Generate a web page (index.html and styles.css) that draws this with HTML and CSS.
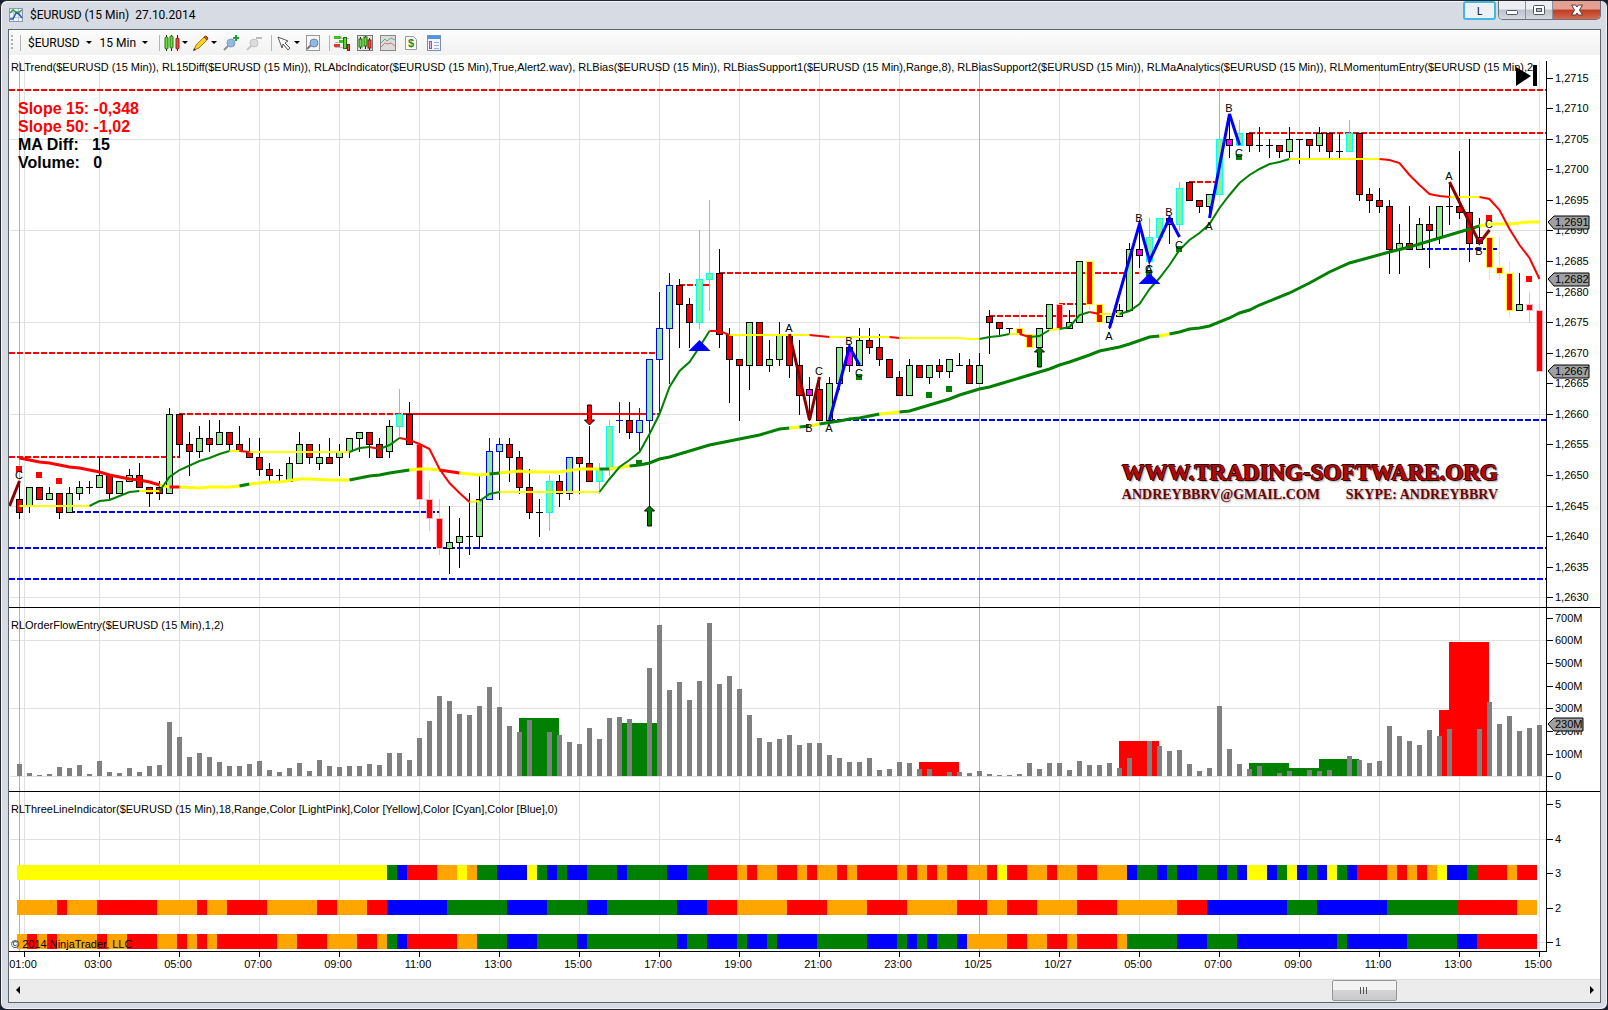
FILE: index.html
```html
<!DOCTYPE html>
<html lang="en">
<head>
    <meta charset="UTF-8">
    <meta name="viewport" content="width=device-width, initial-scale=1.0">
    <title>$EURUSD (15 Min) 27.10.2014</title>
    <link rel="stylesheet" href="styles.css">
</head>
<body>
<div class="window">
    <header class="titlebar">
        <svg class="app-icon" width="14" height="14" viewBox="0 0 14 14">
            <rect x="0.5" y="0.5" width="13" height="13" fill="#eef2fa" stroke="#8d97b0"/>
            <path d="M4.5 1v12M9.5 1v12M1 4.5h12M1 9.5h12" stroke="#b9c3dc"/>
            <path d="M1 5l3-3 3 2 3 0 3-2" fill="none" stroke="#2fa12f" stroke-width="1.5"/>
            <path d="M1 11h3l3-6 3 1 3 4" fill="none" stroke="#2757b8" stroke-width="1.5"/>
        </svg>
        <h1>$EURUSD (15 Min)&nbsp; 27.10.2014</h1>
        <button class="link-btn">L</button>
        <div class="win-buttons">
            <button aria-label="Minimize"><svg width="14" height="12" viewBox="0 0 14 12"><rect x="1.5" y="6.5" width="11" height="4" rx="1" fill="#fff" stroke="#50545c"/></svg></button>
            <button aria-label="Maximize"><svg width="14" height="12" viewBox="0 0 14 12"><rect x="1.5" y="1.5" width="11" height="9" rx="1" fill="#fff" stroke="#50545c"/><rect x="4.5" y="4.5" width="5" height="3" fill="#b5bac4" stroke="#50545c"/></svg></button>
            <button class="close" aria-label="Close"><svg width="14" height="12" viewBox="0 0 14 12"><path d="M1.5 1h4L7 3l1.5-2h4L9.500 6l3 5h-4L7 9l-1.500 2h-4l3-5z" fill="#fff" stroke="#5a3a3a"/></svg></button>
        </div>
    </header>

    <main class="client">
        <nav class="toolbar">
            <span class="grip"></span>
            <span class="sep"></span>
            <button class="text-btn">$EURUSD <i class="caret"></i></button>
            <button class="text-btn">15 Min <i class="caret"></i></button>
            <span class="sep"></span>
            <button class="icon-btn" aria-label="Chart style">
                <svg width="16" height="16" viewBox="0 0 16 16">
                    <path d="M2.5 0v16M7.5 0v16M13.5 0v16" stroke="#222"/>
                    <rect x="1" y="2" width="3" height="12" rx="1" fill="#5fe62c" stroke="#256b12"/>
                    <rect x="6" y="1" width="3" height="12" rx="1" fill="#5fe62c" stroke="#256b12"/>
                    <rect x="12" y="3" width="3" height="11" rx="1" fill="#ee4a3e" stroke="#8c1c16"/>
                </svg>
                <i class="caret"></i>
            </button>
            <button class="icon-btn" aria-label="Drawing tools">
                <svg width="16" height="16" viewBox="0 0 16 16">
                    <path d="M1 15l2-5L11 2l3 3-8 8z" fill="#f8d22a" stroke="#a87f10"/>
                    <path d="M11 2l2-1 2 2-1 2z" fill="#d4553c" stroke="#8c3522"/>
                    <path d="M0 16l1-3 2 2z" fill="#333"/>
                </svg>
                <i class="caret"></i>
            </button>
            <button class="icon-btn wide" aria-label="Zoom in">
                <svg width="18" height="16" viewBox="0 0 18 16">
                    <path d="M2 15l5-5" stroke="#8b8f96" stroke-width="2"/>
                    <circle cx="9" cy="8" r="4" fill="#8cbbe6" stroke="#8b9bb0"/>
                    <path d="M14 0v6M11 3h6" stroke="#18a336" stroke-width="2"/>
                </svg>
            </button>
            <button class="icon-btn wide" aria-label="Zoom out" disabled>
                <svg width="18" height="16" viewBox="0 0 18 16">
                    <path d="M2 15l5-5" stroke="#c6c6c6" stroke-width="2"/>
                    <circle cx="9" cy="8" r="4" fill="#dcdcdc" stroke="#c2c2c2"/>
                    <path d="M11 3h6" stroke="#bbb" stroke-width="2"/>
                </svg>
            </button>
            <span class="sep"></span>
            <button class="icon-btn" aria-label="Cursor">
                <svg width="16" height="16" viewBox="0 0 16 16"><path d="M2 2l10 4-3 2 5 5-2 2-5-6-1 4z" fill="#fff" stroke="#555"/></svg>
                <i class="caret"></i>
            </button>
            <button class="icon-btn" aria-label="Zoom frame">
                <svg width="16" height="16" viewBox="0 0 16 16">
                    <rect x="1.5" y="0.5" width="13" height="15" fill="#f6f6f6" stroke="#999"/>
                    <path d="M2 14l4-4" stroke="#777" stroke-width="2"/>
                    <circle cx="9" cy="8" r="4" fill="#8cbbe6" stroke="#6f87a5"/>
                </svg>
            </button>
            <span class="sep"></span>
            <button class="icon-btn tool" aria-label="Chart trader">
                <svg width="16" height="16" viewBox="0 0 16 16">
                    <path d="M1 3.5h14M1 7.5h9M1 12.5h14" stroke="#bbb"/>
                    <path d="M0 1h6l2 1-2 2H0zM5 5h4v3H5z" fill="#3fbf22"/>
                    <path d="M0 9h6v3H0z" fill="#e23a2e"/>
                    <rect x="9.5" y="2.5" width="3" height="11" fill="#5fd62c" stroke="#256b12"/>
                    <rect x="13.5" y="9.5" width="2" height="6" fill="#ee4a3e" stroke="#8c1c16"/>
                </svg>
            </button>
            <button class="icon-btn tool" aria-label="Data series">
                <svg width="16" height="16" viewBox="0 0 16 16">
                    <rect x="0.5" y="0.5" width="15" height="15" fill="#e4e4e4" stroke="#777"/>
                    <path d="M3.5 2v12M8.5 1v13M12.5 3v12" stroke="#222"/>
                    <rect x="2" y="4" width="3" height="8" fill="#5fe62c" stroke="#256b12"/>
                    <rect x="7" y="2" width="3" height="9" fill="#5fe62c" stroke="#256b12"/>
                    <rect x="11" y="5" width="3" height="8" fill="#ee4a3e" stroke="#8c1c16"/>
                </svg>
            </button>
            <button class="icon-btn tool" aria-label="Indicators">
                <svg width="16" height="16" viewBox="0 0 16 16">
                    <rect x="0.5" y="0.5" width="15" height="15" fill="#dcdcdc" stroke="#888"/>
                    <path d="M1 8l4-4 2 2 4-3 4 2" fill="none" stroke="#4bb588"/>
                    <path d="M1 12l4-4 3 1 3-1 4 3" fill="none" stroke="#e07070"/>
                </svg>
            </button>
            <button class="icon-btn tool" aria-label="Strategies">
                <svg width="16" height="16" viewBox="0 0 16 16">
                    <path d="M2.5 1.5h8l3 3v10h-11z" fill="#fff" stroke="#999"/>
                    <text x="8" y="12" class="dollar">$</text>
                </svg>
            </button>
            <button class="icon-btn tool" aria-label="Properties">
                <svg width="16" height="16" viewBox="0 0 16 16">
                    <rect x="1.5" y="0.5" width="13" height="15" fill="#f3f6fc" stroke="#7890b8"/>
                    <path d="M2 1h12v3H2z" fill="#4f97e0"/>
                    <rect x="3.5" y="6.5" width="2" height="7" fill="#d8c4f4" stroke="#8a56d0"/>
                    <path d="M8 7.5h5M8 10.5h5M8 13.5h5" stroke="#9fb0cc"/>
                </svg>
            </button>
        </nav>

        <div class="chart">
            <section class="pane pane-price">
                <svg class="plot" id="price"></svg>
                <p class="pane-title">RLTrend($EURUSD (15 Min)), RL15Diff($EURUSD (15 Min)), RLAbcIndicator($EURUSD (15 Min),True,Alert2.wav), RLBias($EURUSD (15 Min)), RLBiasSupport1($EURUSD (15 Min),Range,8), RLBiasSupport2($EURUSD (15 Min)), RLMaAnalytics($EURUSD (15 Min)), RLMomentumEntry($EURUSD (15 Min),2,</p>
                <div class="stats">
                    <p class="down">Slope 15: -0,348</p>
                    <p class="down">Slope 50: -1,02</p>
                    <p>MA Diff:&nbsp;&nbsp; 15</p>
                    <p>Volume:&nbsp;&nbsp; 0</p>
                </div>
                <button class="go-last" aria-label="Go to last bar"><svg width="22" height="22" viewBox="0 0 22 22"><path d="M0 2l15 9L0 21zM17 0h4v21h-4z"/></svg></button>
                <div class="watermark">
                    <p class="site">WWW.TRADING-SOFTWARE.ORG</p>
                    <p class="contact"><span>ANDREYBBRV@GMAIL.COM</span><span>SKYPE: ANDREYBBRV</span></p>
                </div>
            </section>
            <section class="pane pane-volume">
                <svg class="plot" id="volume"></svg>
                <p class="pane-title">RLOrderFlowEntry($EURUSD (15 Min),1,2)</p>
            </section>
            <section class="pane pane-lines">
                <svg class="plot" id="lines"></svg>
                <p class="pane-title">RLThreeLineIndicator($EURUSD (15 Min),18,Range,Color [LightPink],Color [Yellow],Color [Cyan],Color [Blue],0)</p>
                <p class="copyright">© 2014 NinjaTrader, LLC</p>
            </section>
            <div class="pane pane-time">
                <svg class="plot" id="time"></svg>
            </div>
        </div>

        <div class="scrollbar">
            <button aria-label="Scroll left"><svg width="4" height="8" viewBox="0 0 4 8"><path d="M4 0v8L0 4z"/></svg></button>
            <input type="range" min="0" max="1000" value="875" aria-label="Chart position">
            <button aria-label="Scroll right"><svg width="4" height="8" viewBox="0 0 4 8"><path d="M0 0v8l4-4z"/></svg></button>
        </div>
    </main>
</div>
<script src="chart.js"></script>
</body>
</html>
```

FILE: styles.css
```css
* {
    box-sizing: border-box;
}

body {
    margin: 0;
    height: 100vh;
    background: #14202e;
    font-family: "Liberation Sans", Arial, sans-serif;
    font-size: 11px;
    color: #000;
    overflow: hidden;
}

p, h1 {
    margin: 0;
    font-weight: normal;
}

button {
    border: none;
    background: none;
    padding: 0;
    font-family: inherit;
    color: inherit;
}

.window {
    height: 100vh;
    display: flex;
    flex-direction: column;
    border: 1px solid #26262e;
    border-radius: 7px;
    padding: 0 6px 6px 7px;
    background: #d6dbe4;
    box-shadow: inset 1px 1px 0 #f6f8fa, inset -1px -1px 0 #f0f3f6;
}

/* title bar */
.titlebar {
    display: flex;
    align-items: center;
    height: 28px;
    padding: 0 0 0 1px;
    flex: none;
}

.app-icon {
    margin-right: 7px;
}

.titlebar h1 {
    flex: 1;
    font-family: Roboto, "Open Sans", sans-serif;
    font-size: 12px;
}

.link-btn {
    align-self: flex-start;
    width: 33px;
    height: 19px;
    margin-right: 2px;
    border: 2px solid #3fb8e4;
    border-radius: 3px;
    background: #eef1f4;
    font-family: "Open Sans", sans-serif;
    font-size: 11px;
    line-height: 14px;
}

.win-buttons {
    display: flex;
    align-self: flex-start;
    height: 19px;
    border: 1px solid #6d737d;
    border-top: none;
    border-radius: 0 0 5px 5px;
    overflow: hidden;
}

.win-buttons button {
    width: 27px;
    border-right: 1px solid #8a9099;
    background: linear-gradient(#eceef2 45%, #bcc2cb 50%, #d5d9e0);
    display: flex;
    align-items: center;
    justify-content: center;
}

.win-buttons .close {
    width: 47px;
    border-right: none;
    background: linear-gradient(#e4a193 45%, #bd3c24 50%, #d66a4c);
}

/* client area */
.client {
    flex: 1;
    min-height: 0;
    display: flex;
    flex-direction: column;
    border: 1px solid #60646c;
    background: #fff;
}

.toolbar {
    flex: none;
    display: flex;
    align-items: center;
    height: 25px;
    padding-left: 2px;
    background: linear-gradient(#fdfdfd, #f1f1f1);
    font-family: Roboto, "Open Sans", sans-serif;
}

.toolbar button {
    font-size: 12px;
    display: flex;
    align-items: center;
}

.grip {
    width: 2px;
    height: 15px;
    background: repeating-linear-gradient(#b0b0b0 0 2px, transparent 2px 4px);
}

.sep {
    width: 1px;
    height: 16px;
    margin: 0 4px 0 3px;
    background: #b4b4b4;
}

.grip + .sep {
    margin: 0 7px;
}

.caret {
    border: 3px solid transparent;
    border-top-color: #000;
    border-bottom: none;
}

.text-btn {
    gap: 6px;
    margin-right: 8px;
}

.icon-btn {
    gap: 2px;
    margin-right: 5px;
}

.icon-btn.tool {
    margin-right: 7px;
}

.dollar {
    font: bold 11px "Liberation Sans", Arial, sans-serif;
    fill: #1c8a1c;
    text-anchor: middle;
}

/* chart panes: every layer of a pane shares one grid cell */
.chart {
    flex: 1;
    min-height: 0;
    display: flex;
    flex-direction: column;
}

.pane {
    display: grid;
    grid-template: minmax(0, 1fr) / minmax(0, 1fr);
    min-height: 0;
    overflow: hidden;
}

.pane > * {
    grid-area: 1 / 1;
}

.pane-price {
    flex: 552 1 0;
}

.pane-volume {
    flex: 183 1 0;
    border-top: 1px solid #000;
}

.pane-lines {
    flex: 159 1 0;
    border-top: 1px solid #000;
}

.pane-time {
    flex: none;
    height: 28px;
}

.plot {
    display: block;
    width: 100%;
    height: 100%;
}

.plot text {
    font-size: 11px;
}

.plot .mark {
    text-anchor: middle;
}

.pane-title {
    align-self: start;
    margin: 11px 54px 0 2px;
    line-height: 13px;
    white-space: nowrap;
    overflow: hidden;
}

.pane-price .pane-title {
    margin-top: 6px;
}

.stats {
    align-self: start;
    justify-self: start;
    padding: 45px 0 0 9px;
    font-size: 16px;
    line-height: 18px;
}

.stats p {
    font-weight: bold;
}

.stats .down {
    color: #f00;
}

.go-last {
    align-self: start;
    justify-self: end;
    width: 22px;
    height: 22px;
    margin: 10px 62px 0 0;
}

.watermark {
    align-self: start;
    justify-self: end;
    margin: 405px 102px 0 0;
    font-family: "Liberation Serif", "Times New Roman", serif;
    color: #b30808;
}

.watermark p {
    font-weight: bold;
}

.watermark .site {
    font-size: 23px;
    line-height: 26px;
    text-shadow: 1px 1px 0 #300, -1px 0 0 #300, 0 -1px 0 #300, 2px 2px 2px #999;
}

.watermark .contact {
    display: flex;
    justify-content: space-between;
    font-size: 14px;
    line-height: 18px;
    color: #6c0404;
    text-shadow: 1px 1px 2px #999;
}

.copyright {
    align-self: end;
    margin-left: 2px;
    line-height: 13px;
}

/* scrollbar */
.scrollbar {
    flex: none;
    display: flex;
    align-items: flex-start;
    height: 23px;
    background: #ececec;
    border-top: 1px solid #dcdcdc;
}

.scrollbar button {
    width: 17px;
    height: 20px;
    display: flex;
    align-items: center;
    justify-content: center;
}

.scrollbar input {
    appearance: none;
    flex: 1;
    min-width: 0;
    height: 21px;
    margin: 0;
    background: none;
}

.scrollbar input::-webkit-slider-thumb {
    appearance: none;
    width: 65px;
    height: 21px;
    border: 1px solid #979797;
    border-radius: 2px;
    background:
        repeating-linear-gradient(90deg, #555 0 1px, transparent 1px 3px) center / 9px 7px no-repeat,
        linear-gradient(#f3f3f3 45%, #d4d4d6 50%, #c9c9cb);
}
```

FILE: chart.js
```js
const SVG = 'http://www.w3.org/2000/svg';
const BARS = 153;
const LEFT = 10;      // first bar
const AXIS = 53;      // width of the price axis on the right
const RIGHT = 61;     // last bar to the right edge

// open, high, low, close in pips over 1,2600; last letter is the outline
const candles = `
46 49 43 44|45 48 44 48|48 48 46 46|46 48 46 47|47 47 43 44|44 48 44 47|47 49 46 48|48 49 47 48
48 53 48 50|50 50 46 47|47 49 47 49|49 51 49 50|50 52 48 48|48 48 45 47|48 49 46 47|47 61 47 60
60 60 53 55|55 57 50 54|54 58 53 56|56 59 54 55|55 59 55 57|57 57 54 55|55 58 54 54|54 56 53 53
53 56 50 51|51 52 49 50|50 51 49 50|49 53 49 52|52 57 52 55|55 55 52 53|52 55 51 53|53 56 52 52
53 55 50 54|54 56 53 56|56 57 54 57|57 57 53 55|55 56 53 53|54 59 53 58|58 64 56 60 c|60 62 55 55
55 55 45 46 p|46 49 41 43 p|43 46 37 38 p|38 45 34 39|39 43 35 40|40 47 37 40|40 50 38 46|46 56 46 54 b
54 56 46 55 b|55 56 49 53|53 54 47 48|48 51 43 44|44 46 40 44|44 50 41 49 c|49 50 45 47|47 53 46 53 b
53 53 47 52|52 58 49 49|49 52 47 51 c|51 59 50 58 c|59 62 57 59 b|59 62 56 57|57 61 54 59 b|59 69 45 69 b
69 80 60 74 b|74 83 65 81 b|81 82 71 78|78 79 71 75|75 90 74 82 c|82 95 77 83 c|83 87 71 73|73 74 62 69
69 69 59 68|68 75 64 75|75 75 68 68|68 72 67 69|69 75 68 73|73 73 66 68|68 72 60 63|64 66 59 63 m
64 66 59 59|59 66 59 65|65 71 64 71|71 71 67 68 m|68 74 68 72|72 74 70 71|71 73 68 69|69 69 66 66
66 67 63 63|63 69 63 68|68 68 66 66|66 68 65 68|68 69 66 67|67 69 66 69|68 70 68 68|68 69 65 65
65 70 65 68|76 77 70 75|75 75 73 74|74 74 73 74|74 77 73 73 y|73 73 71 71 y|71 74 71 74|74 78 74 78
78 78 73 74 p|74 77 74 75|75 85 75 85|85 85 77 78 y|78 78 71 75 y|75 76 74 76|76 78 76 77|77 88 77 87
87 90 84 86 m|85 92 85 89 c|89 92 89 92 c|92 92 88 91 m|91 98 90 97 c|98 98 95 95|95 95 93 94|94 96 93 96
96 113 96 105 c|105 109 102 104 m|104 108 104 106 c|106 106 103 104|104 107 103 104|104 105 102 104|104 104 102 103|103 107 102 105
105 105 101 105|105 105 102 104|104 107 103 106|106 106 102 103|103 106 102 103|103 108 103 106 c|106 106 95 96|96 97 93 95
95 97 93 94|94 95 83 87|87 91 83 88|88 94 87 87|87 92 87 91|91 94 84 90|89 94 88 94|94 98 91 94
94 103 92 93|93 105 85 88|89 92 88 88 m|89 89 82 84 y|84 89 82 83 y|83 85 76 77 y|77 83 77 78|78 80 75 77 p
77 78 67 67 p`.trim().split(/[|\n]/);

const outline = { c: '#00ffff', b: '#0000ff', y: '#ffff00', p: '#ffb6c1', m: '#000000' };
const colors = { r: '#ff0000', g: '#008000', b: '#0000ff', y: '#ffff00', o: '#ffa500' };

// moving averages: colour, then bar:price pairs
const slow = [
    'r 0:52.8 2:52.2 3:52 5:51.3 6:51.2 8:50.5 9:50 11:49.4 12:49.2 13:48.9 14:48.3', 'y 14:48.3 15:48.1', 'r 15:48.1 16:48',
    'y 16:48 18:47.9 19:48.1 21:48.1 22:48.2', 'g 22:48.2 23:48.6', 'y 23:48.6 25:48.8 26:48.8 28:49.4 29:49.3 31:49.1 33:49.2',
    'g 33:49.2 35:49.8 36:50 37:50.3 39:50.8', 'y 39:50.8 40:51 41:51 42:50.8', 'r 42:50.8 44:50.3', 'y 44:50.3 46:50 47:50.2',
    'g 47:50.2 48:50.4', 'y 48:50.4 50:50.7 51:50.5 54:50.5 56:50.9 58:50.9', 'g 58:50.9 59:51', 'y 59:51 61:51.4',
    'g 61:51.4 62:51.6 63:52 64:52.6 65:52.9 69:54.9 72:55.9 74:56.5 76:57.5 77:57.7', 'y 77:57.7 78:57.8', 'g 78:57.8 79:58',
    'y 79:58 80:58.4', 'g 80:58.4 82:58.9 83:59.2 84:59.3 86:60', 'y 86:60 88:60.3',
    'g 88:60.3 89:60.5 92:61.9 93:62.5 94:63 95:63.6 96:64 97:64.4 98:64.8 100:65.8 101:66.3 102:66.9 103:67.4 104:68 105:68.4 107:69.7 108:70.2 110:70.9 111:71.5 113:72.5 114:72.8',
    'y 114:72.8 115:73',
    'g 115:73 116:73.4 117:73.8 118:74 119:74.3 121:75.7 122:76.5 123:77 124:77.8 127:79.8 129:81.4 131:83.2 133:84.6 137:86.5 139:87.3 141:88.3 143:89.3 145:90.2 146:90.7',
    'y 146:90.7 147:91 149:91.1 151:91.4 152:91.3'
];
const fast = [
    'y 0:45 7:45', 'g 7:45 8:45.7 9:45.9 11:47.2 12:47.4', 'y 12:47.4 14:47.4', 'g 14:47.4 15:49.7 16:50.8 18:52.3 19:52.8 20:53.5 21:54',
    'y 21:54 22:54', 'r 22:54 23:53.8', 'y 23:53.8 33:53.8', 'g 33:53.8 34:54.4 35:54.6', 'r 35:54.6 36:54.3', 'g 36:54.3 37:54.9 38:56',
    'r 38:56 39:55.8 40:55.1 41:54.3 42:51 43:48.7 44:47 45:45.6', 'y 45:45.6 46:45.8', 'g 46:45.8 47:46.9 48:47.2', 'y 48:47.2 58:47.2',
    'g 58:47.2 59:49.4 60:51.3 61:52.5 62:53.7 63:56.7 64:60 65:64.4 66:67 67:68.5 68:71 69:73.6', 'r 69:73.6 70:73.5 71:72.9',
    'y 71:72.9 79:72.9', 'r 79:72.9 81:72.6', 'y 81:72.6 87:72.6', 'r 87:72.6 88:72.4', 'y 88:72.4 94:72.4 95:72.2 96:72.2',
    'g 96:72.2 97:72.6 98:72.8 99:73', 'y 99:73 100:73', 'r 100:73 101:72.5', 'g 101:72.5 102:72.8 103:73.7', 'y 103:73.7 104:73.8',
    'g 104:73.8 105:74.2 106:76.2 107:76.6', 'r 107:76.6 108:76.3', 'y 108:76.3 110:76.3',
    'g 110:76.3 111:76.9 112:78 113:80.4 114:82.3 115:84.3 116:86.8 117:88.4 118:89.6 119:91.1 120:93.7 121:95.8 122:97.8 123:99.1 124:100.1 125:100.9 126:101.2 127:101.7',
    'y 127:101.7 136:101.7', 'r 136:101.7 137:101.5 138:101 139:99 140:97.4 141:96 142:95.6 143:95.5', 'y 143:95.5 146:95.5',
    'r 146:95.5 147:95.2 148:93.4 149:90.2 150:87.6 151:85.5 152:82'
];

// support and resistance: colour, price, from bar, to bar (null = edge of the plot)
const levels = [
    ['r', 113, null, null], ['r', 53, null, 16], ['r', 60, 16, 63], ['r', 60, 39, 64], ['r', 70, null, 64], ['r', 81, 66, 69],
    ['r', 83, 70, 112], ['r', 76, 97, 106], ['r', 78, 104, 107], ['r', 98, 117, 120], ['r', 106, 123, null],
    ['b', 44, 5, 42], ['b', 38, null, null], ['b', 33, null, null], ['b', 59, 81, null], ['b', 87, 140, 148]
];

const waves = [
    ['#8b0000', '-1:45 0:49'], ['#8b0000', '77:73 79:59 80:66'], ['#0000ff', '81:59 83:71 84:68'],
    ['#0000ff', '109:74 112:91 113:85 115:92 116:89'], ['#0000ff', '119:92 121:109 122:104'], ['#8b0000', '143:98 146:88 147:90']
];

// letter, bar, price, side (1 = above the point)
const letters = [
    ['C', 0, 49, 1], ['A', 77, 73, 1], ['B', 79, 59, 0], ['C', 80, 66, 1], ['A', 81, 59, 0], ['B', 83, 71, 1], ['C', 84, 68, 0],
    ['A', 109, 74, 0], ['B', 112, 91, 1], ['C', 113, 85, 0], ['A', 113, 85, 0], ['B', 115, 92, 1], ['C', 116, 89, 0],
    ['A', 119, 92, 0], ['B', 121, 109, 1], ['C', 122, 104, 0], ['A', 143, 98, 1], ['B', 146, 88, 0], ['C', 147, 90, 1]
];

const dots = [
    ['r', 0, 51], ['r', 2, 50], ['r', 4, 49], ['g', 62, 52], ['g', 84, 66], ['g', 91, 63], ['g', 93, 64],
    ['g', 113, 83], ['g', 116, 87], ['g', 122, 102], ['r', 147, 92], ['r', 151, 82]
];
const triangles = [[68, 72], [113, 83]];

// millions
const volumes = [
    56, 16, 7, 12, 43, 38, 51, 12, 69, 21, 16, 38, 21, 47, 51, 241, 175, 87, 104, 87, 65, 47, 47, 56, 69, 29, 21, 38, 60, 25,
    74, 47, 43, 47, 47, 56, 51, 104, 104, 74, 171, 245, 356, 334, 276, 272, 312, 395, 307, 223, 197, 250, 0, 197, 184, 153, 144, 215, 166, 259,
    263, 254, 0, 479, 669, 382, 417, 338, 422, 678, 409, 444, 387, 272, 171, 153, 166, 184, 140, 148, 148, 96, 82, 65, 65, 82, 29, 34, 65, 60,
    34, 34, 0, 21, 21, 16, 25, 12, 7, 7, 12, 60, 34, 60, 60, 29, 69, 51, 51, 60, 38, 82, 0, 157, 135, 113, 118, 56, 25, 38,
    312, 122, 56, 34, 47, 0, 16, 25, 0, 29, 25, 29, 0, 91, 74, 60, 69, 223, 179, 157, 140, 206, 179, 210, 0, 0, 210, 329, 232, 268,
    201, 215, 228
];
const flows = [
    ['g', 50, 256], ['g', 60, 234], ['r', 90, 63], ['r', 110, 156], ['g', 123, 59], ['g', 127, 37], ['g', 130, 77], ['r', 142, 292], ['r', 143, 592]
];

// run lengths of the three trend rows, keyed by axis value
const rows = {
    3: 'y37 g1 b1 r3 o2 y1 o1 g2 b3 y1 g1 b1 g1 b2 g3 b1 g4 b2 g2 r3 o1 r1 o2 r2 o1 r1 o2 r1 o1 r4 o1 r1 o1 r1 o1 r2 o2 r1 y1 r2 o2 r1 o2 r2 o3 b1 g2 b1 g1 b2 g2 b1 g1 b1 y2 b1 g1 y1 b1 g1 b1 y1 g1 b1 r3 o1 r1 o1 r1 o1 y1 b2 g1 r3 o1 r2',
    2: 'o4 r1 o3 r6 o4 r1 o2 r4 o5 r2 o3 r2 b6 g6 b4 g4 b2 g7 b3 r3 o5 r4 o4 r4 o5 r3 o2 r3 o4 r4 o6 r3 b8 g3 b7 g7 r6 o2',
    1: 'o1 r1 o1 r1 o4 r1 o2 r3 o2 r1 o1 r1 o1 r6 o2 r3 o3 r2 o1 g1 b1 r5 o2 g3 b3 g4 b1 g9 b1 g2 b3 g1 b2 g1 b4 g5 b3 g1 b1 g1 b1 g2 b1 o4 r2 o2 r2 o1 r4 o1 g5 b3 g3 b10 g1 b6 g5 b2 r6'
};

const times = [[0.5, '01:00']];
['03:00', '05:00', '07:00', '09:00', '11:00', '13:00', '15:00', '17:00', '19:00', '21:00', '23:00', '10/25', '10/27',
    '05:00', '07:00', '09:00', '11:00', '13:00', '15:00'].forEach((t, i) => times.push([8 + i * 8, t]));

function el(parent, name, attrs, text) {
    const node = document.createElementNS(SVG, name);
    for (const key in attrs) node.setAttribute(key, attrs[key]);
    if (text !== undefined) node.textContent = text;
    parent.appendChild(node);
    return node;
}

function rect(svg, x, y, w, h, fill) {
    return el(svg, 'rect', { x, y, width: w, height: h, fill });
}

function setup(id, min, max) {
    const svg = document.getElementById(id);
    svg.innerHTML = '';
    const w = svg.clientWidth;
    const h = svg.clientHeight;
    return {
        svg, w, h,
        step: (w - LEFT - RIGHT) / (BARS - 1),
        x(i) { return Math.round(LEFT + i * this.step); },
        y(v) { return Math.round((max - v) / (max - min) * h); }
    };
}

function grid(c, values, top) {
    times.forEach(([bar]) => rect(c.svg, c.x(bar), top, 1, c.h - top, '#e0e0e0'));
    values.forEach(v => rect(c.svg, 1, c.y(v), c.w - AXIS, 1, '#e0e0e0'));
    [0, 96].forEach(bar => rect(c.svg, c.x(bar), top, 1, c.h - top, '#b4b4b4'));
}

function axis(c, values, format, top) {
    const x = c.w - AXIS;
    rect(c.svg, x - 1, top, 1, c.h - top, '#000');
    values.forEach(v => {
        rect(c.svg, x, c.y(v), 6, 1, '#000');
        el(c.svg, 'text', { x: x + 8, y: c.y(v) + 4 }, format(v));
    });
}

function tag(c, v, text, width) {
    const x = c.w - AXIS + 1;
    const y = c.y(v);
    el(c.svg, 'path', { d: `M${x} ${y}l6 -6h${width}v13h-${width}z`, fill: '#a0a0a0', stroke: '#000' });
    el(c.svg, 'text', { x: x + 7, y: y + 4 }, text);
}

function points(c, str) {
    return str.split(' ').map(p => {
        const [bar, v] = p.split(':');
        return (c.x(+bar) + 0.5) + ',' + c.y(+v);
    }).join(' ');
}

function average(c, parts, width) {
    parts.forEach(part => {
        el(c.svg, 'polyline', { points: points(c, part.slice(2)), fill: 'none', stroke: colors[part[0]], 'stroke-width': width });
    });
}

function candle(c, i, str) {
    const [open, high, low, close, type] = str.split(' ');
    const edge = outline[type] || '#000';
    const x = c.x(i);
    const top = c.y(Math.max(open, close));
    const bottom = c.y(Math.min(open, close));
    rect(c.svg, x, c.y(high), 1, c.y(low) - c.y(high) + 1, edge);
    rect(c.svg, x - 3, top, 7, bottom - top + 1, edge);
    if (open === close) return;
    let fill = +close > +open ? '#90ee90' : '#ff0000';
    if (type === 'm') fill = '#ff00ff';
    rect(c.svg, x - 2, top + 1, 5, bottom - top - 1, fill);
}

function arrow(c, bar, y, dir, fill) {
    const x = c.x(bar) + 0.5;
    el(c.svg, 'path', { d: `M${x} ${y}l5 ${5 * dir}h-3v${15 * dir}h-4v${-15 * dir}h-3z`, fill, stroke: '#000' });
}

function drawPrice() {
    const c = setup('price', 28.4, 118.7);
    grid(c, [105, 90, 75, 60, 45, 30], 6);

    levels.forEach(([color, v, from, to]) => {
        const x1 = from === null ? 0 : c.x(from);
        const x2 = to === null ? c.w - AXIS - 1 : c.x(to);
        el(c.svg, 'path', { d: `M${x1} ${c.y(v)}H${x2}`, stroke: colors[color], 'stroke-width': 2, 'stroke-dasharray': '6 2' });
    });
    candles.forEach((str, i) => candle(c, i, str));
    average(c, slow, 3);
    average(c, fast, 2);

    dots.forEach(([color, bar, v]) => rect(c.svg, c.x(bar) - 3, c.y(v) - 3, 6, 6, colors[color]));
    triangles.forEach(([bar, v]) => {
        el(c.svg, 'path', { d: `M${c.x(bar) + 0.5} ${c.y(v)}l11 11h-22z`, fill: '#0000ff' });
    });
    waves.forEach(([stroke, pts]) => {
        el(c.svg, 'polyline', { points: points(c, pts), fill: 'none', stroke, 'stroke-width': 3 });
    });
    arrow(c, 57, c.y(58.2), -1, '#ff0000');
    arrow(c, 63, c.y(45), 1, '#008000');
    arrow(c, 102, c.y(71), 1, '#008000');
    letters.forEach(([t, bar, v, above]) => {
        el(c.svg, 'text', { x: c.x(bar), y: c.y(v) + (above ? -2 : 12), class: 'mark' }, t);
    });

    const ticks = [];
    for (let v = 115; v >= 30; v -= 5) ticks.push(v);
    const label = v => '1,' + Math.floor(2600 + v);
    axis(c, ticks, label, 6);
    [91.3, 82, 67].forEach(v => tag(c, v, label(v), 35));
}

function drawVolume() {
    const c = setup('volume', -64, 743);
    grid(c, [600, 300, 0], 0);
    flows.forEach(([color, bar, v]) => rect(c.svg, c.x(bar), c.y(v), c.x(bar + 4) - c.x(bar), c.y(0) - c.y(v), colors[color]));
    volumes.forEach((v, i) => rect(c.svg, c.x(i) - 2, c.y(v), 5, c.y(0) - c.y(v), '#808080'));
    axis(c, [700, 600, 500, 400, 300, 200, 100, 0], v => v ? v + 'M' : '0', 0);
    tag(c, 230, '230M', 29);
}

function drawLines() {
    const c = setup('lines', 0.75, 5.35);
    grid(c, [4, 1], 0);
    for (const value in rows) {
        let bar = 0;
        rows[value].split(' ').forEach(run => {
            const next = bar + Number(run.slice(1));
            rect(c.svg, c.x(bar) - 2, c.y(value) - 8, c.x(next) - c.x(bar), 15, colors[run[0]]);
            bar = next;
        });
    }
    axis(c, [5, 4, 3, 2, 1], v => v, 0);
}

function drawTime() {
    const c = setup('time', 0, 1);
    rect(c.svg, 0, 0, c.w - AXIS, 1, '#000');
    times.forEach(([bar, text]) => {
        rect(c.svg, c.x(bar), 0, 1, 6, '#000');
        el(c.svg, 'text', { x: c.x(bar) - 1, y: 17, class: 'mark' }, text);
    });
}

function draw() {
    drawPrice();
    drawVolume();
    drawLines();
    drawTime();
}

window.addEventListener('resize', draw);
draw();
```
